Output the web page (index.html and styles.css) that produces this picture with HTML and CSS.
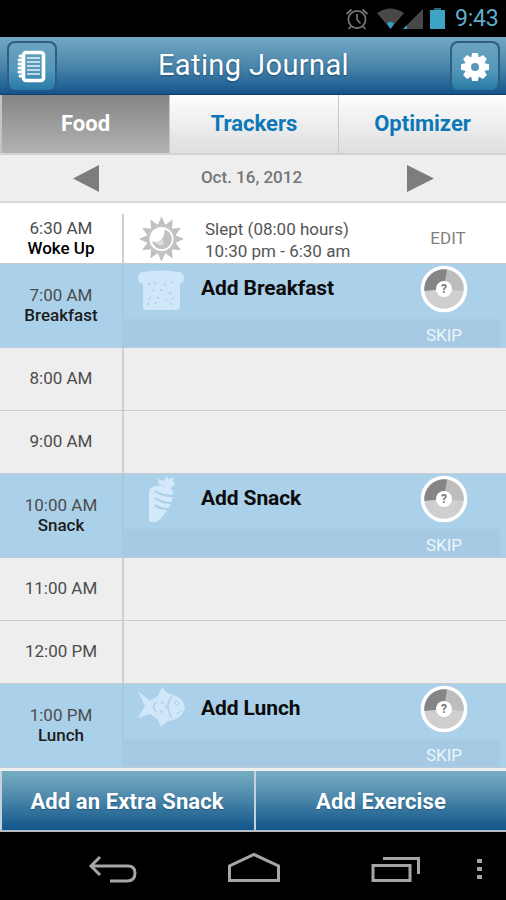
FILE: index.html
```html
<!DOCTYPE html>
<html lang="en">
<head>
    <meta charset="UTF-8">
    <meta name="viewport" content="width=device-width, initial-scale=1.0">
    <title>Eating Journal</title>
    <link rel="stylesheet" href="styles.css">
</head>
<body>
    <div class="app">
        <div class="status-bar">
            <svg class="status-icons" width="102" height="24" viewBox="0 0 102 24">
                <g fill="none" stroke="#777" stroke-width="1.7">
                    <circle cx="12" cy="12.5" r="8.600"/>
                    <path d="M12 7v5.500l3.500 4M1.500 7l5-4.500M17.500 2.500l5 4.500M6 19.500L3.500 22M18 19.500l2.500 2.500"/>
                </g>
                <path d="M32 6q13.500-9 27 0L45.500 22z" fill="#484848"/>
                <path d="M42 16.500q3.500-3.500 7 0l-3.500 5.500z" fill="#2fa0c8"/>
                <path d="M58 22L78 2v20z" fill="#484848"/>
                <path d="M58 22l4-4v4z" fill="#2fa0c8"/>
                <path d="M89 1h7v3h-7z" fill="#2c6478"/>
                <path d="M85 3h15v19H85z" fill="#3da4c6"/>
            </svg>
            <span class="clock">9:43</span>
        </div>

        <div class="header">
            <button class="header-btn">
                <svg width="30" height="34" viewBox="0 0 30 34">
                    <rect x="6.500" y="2.500" width="20" height="28" rx="2.500" fill="none" stroke="#fff" stroke-width="3.600"/>
                    <path d="M10 8h13M10 12h13M10 16h13M10 20h13M10 24h13" stroke="#e4f3f8" stroke-width="1.700"/>
                    <path d="M3 6h3M2 10h4M2 14h4M2 18h4M2 22h4M3 26h3" stroke="#fff" stroke-width="3" stroke-linecap="round"/>
                </svg>
            </button>
            <h1 class="title">Eating Journal</h1>
            <button class="header-btn">
                <svg width="30" height="30" viewBox="-15 -15 30 30">
                    <g fill="#fff">
                        <path id="tooth" d="M-4.200-8l1.400-6h5.600l1.400 6z"/>
                        <use href="#tooth" transform="rotate(45)"/>
                        <use href="#tooth" transform="rotate(90)"/>
                        <use href="#tooth" transform="rotate(135)"/>
                        <use href="#tooth" transform="rotate(180)"/>
                        <use href="#tooth" transform="rotate(225)"/>
                        <use href="#tooth" transform="rotate(270)"/>
                        <use href="#tooth" transform="rotate(315)"/>
                    </g>
                    <circle r="7" fill="none" stroke="#fff" stroke-width="6"/>
                </svg>
            </button>
        </div>

        <div class="tabs">
            <div class="tab active">Food</div>
            <div class="tab">Trackers</div>
            <div class="tab">Optimizer</div>
        </div>

        <div class="date-bar">
            <svg width="27" height="28" viewBox="0 0 27 28"><path d="M0 14.500L26 1v27z" fill="#7d7d7d"/></svg>
            <span class="date">Oct. 16, 2012</span>
            <svg width="27" height="28" viewBox="0 0 27 28"><path d="M27 14.500L0 1v27z" fill="#7d7d7d"/></svg>
        </div>

        <div class="journal">
            <div class="row woke">
                <div class="time">6:30 AM<b>Woke Up</b></div>
                <div class="entry">
                    <svg class="icon" width="48" height="48" viewBox="-24.500 -24 48 48">
                        <g fill="#bfbfbf">
                            <path id="ray" d="M-3.800-14L0-22.500l3.800 8.500z"/>
                            <use href="#ray" transform="rotate(30)"/>
                            <use href="#ray" transform="rotate(60)"/>
                            <use href="#ray" transform="rotate(90)"/>
                            <use href="#ray" transform="rotate(120)"/>
                            <use href="#ray" transform="rotate(150)"/>
                            <use href="#ray" transform="rotate(180)"/>
                            <use href="#ray" transform="rotate(210)"/>
                            <use href="#ray" transform="rotate(240)"/>
                            <use href="#ray" transform="rotate(270)"/>
                            <use href="#ray" transform="rotate(300)"/>
                            <use href="#ray" transform="rotate(330)"/>
                        </g>
                        <circle r="13.500" fill="#fff" stroke="#c4c4c4" stroke-width="3"/>
                        <path d="M3-9.500A10 10 0 1 1-9.500 2q5 3 9-1 4-4 3.500-10.500z" fill="#c2c2c2"/>
                        <path d="M-6 3q4 0 6-3 3 2 2 5-3 4-8-2z" fill="#dedede"/>
                    </svg>
                    <div class="slept">Slept (08:00 hours)<br>10:30 pm - 6:30 am</div>
                    <div class="edit">EDIT</div>
                </div>
            </div>

            <div class="row meal">
                <div class="time">7:00 AM<b>Breakfast</b></div>
                <div class="entry">
                    <svg class="icon" width="48" height="48" viewBox="0 -3 48 48">
                        <path d="M6 5Q24 2 42 5q5 1 5 6 0 5-4 6v23q0 3-3 3H9q-3 0-3-3V17q-5-1-5-6 0-5 5-6z" fill="#cfe7f8"/>
                        <path d="M11 17h2M17 15l2 2M27 18h2M34 16l2-1M15 24l2-1M23 23h2M32 25l2 2M12 32l2-2M20 31h2M28 33l2-1M36 30v2M10 37h2M18 37l1-2M33 37h2" stroke="#b2cbdb" stroke-width="1.300"/>
                    </svg>
                    <div class="meal-name">Add Breakfast</div>
                    <div class="actions">
                        <svg class="dial" width="48" height="48" viewBox="-24 -24 48 48">
                            <g id="dial">
                                <circle r="21.500" fill="#cfcfcf" stroke="#fff" stroke-width="3.600"/>
                                <path d="M0 0L3-19.500A19.700 19.700 0 0 1 19.700 2z" fill="#bdbdbd"/>
                                <path d="M0 0l-19.600 2A19.700 19.700 0 0 1 3-19.500z" fill="#858585"/>
                                <circle r="8" fill="#fff"/>
                                <text class="dial-text" y="4">?</text>
                            </g>
                        </svg>
                        <span class="skip">SKIP</span>
                    </div>
                </div>
            </div>

            <div class="row"><div class="time">8:00 AM</div><div class="entry"></div></div>
            <div class="row"><div class="time">9:00 AM</div><div class="entry"></div></div>

            <div class="row meal">
                <div class="time">10:00 AM<b>Snack</b></div>
                <div class="entry">
                    <svg class="icon" width="48" height="48" viewBox="0 0 48 48">
                        <path d="M12 17q1-4 6-5 9-1 16 3 3 2 2 6-1 8-5 14-4 7-10 12-3 2-6 2-3 0-3-3z" fill="#d3e8f8"/>
                        <path d="M22 11l-1-6 6 2 2-5 3 3 5-2-1 4 2 3-5 5q-5-4-11-4z" fill="#d3e8f8"/>
                        <path d="M18 17q6 5 19 5M18 24q6 5 17 5M18 31q4 4 13 4" fill="none" stroke="#aacfe9" stroke-width="2"/>
                    </svg>
                    <div class="meal-name">Add Snack</div>
                    <div class="actions">
                        <svg class="dial" width="48" height="48" viewBox="-24 -24 48 48"><use href="#dial"/></svg>
                        <span class="skip">SKIP</span>
                    </div>
                </div>
            </div>

            <div class="row"><div class="time">11:00 AM</div><div class="entry"></div></div>
            <div class="row"><div class="time">12:00 PM</div><div class="entry"></div></div>

            <div class="row meal">
                <div class="time">1:00 PM<b>Lunch</b></div>
                <div class="entry">
                    <svg class="icon" width="48" height="48" viewBox="0 0 48 48">
                        <path d="M1 7l12 10 8-5 4-9 5 6q16 3 18 14-2 12-17 14l-7 6-3-7-8-6L1 34l7-12z" fill="#cfe7f8"/>
                        <path d="M35 12q-8 10 0 22M19 18l-3 5 3 5M25 17v3M24 26v3M29 21v3" fill="none" stroke="#b0d1e8" stroke-width="1.500"/>
                        <circle cx="40" cy="19" r="2" fill="none" stroke="#b0d1e8"/>
                        <path d="M39 29q4 1 6-3" fill="none" stroke="#b0d1e8"/>
                    </svg>
                    <div class="meal-name">Add Lunch</div>
                    <div class="actions">
                        <svg class="dial" width="48" height="48" viewBox="-24 -24 48 48"><use href="#dial"/></svg>
                        <span class="skip">SKIP</span>
                    </div>
                </div>
            </div>
        </div>

        <div class="bottom-buttons">
            <button class="add-btn snack">Add an Extra Snack</button>
            <button class="add-btn exercise">Add Exercise</button>
        </div>

        <div class="nav-bar">
            <svg width="506" height="68" viewBox="0 0 506 68" fill="none" stroke="#a6a6a6" stroke-width="3">
                <path d="M100 25l-9 9 9 9M91 34h37q7 0 7 7 0 8-8 8h-17"/>
                <path d="M229.500 48.500V34L254 22.500 278.500 34v14.500z"/>
                <path d="M373 33.500h37v15h-37zM383 26.500h35.500V42"/>
                <path d="M479.500 27v21" stroke-width="5" stroke-dasharray="4 4"/>
            </svg>
        </div>
    </div>
</body>
</html>
```

FILE: styles.css
```css
* {
    box-sizing: border-box;
}

body {
    margin: 0;
    background-color: #000;
    font-family: Roboto, "Liberation Sans", sans-serif;
}

button {
    border: none;
    padding: 0;
    font-family: inherit;
    cursor: pointer;
}

svg {
    display: block;
    flex: none;
}

.app {
    width: 506px;
    height: 900px;
    display: flex;
    flex-direction: column;
    overflow: hidden;
}

.status-bar {
    height: 37px;
    display: flex;
    justify-content: flex-end;
    align-items: center;
    padding-right: 8px;
    background-color: #000;
}

.status-icons {
    margin-right: 8px;
}

.clock {
    width: 43px;
    color: #5eaecb;
    font-size: 23px;
    letter-spacing: -0.2px;
    white-space: nowrap;
}

.header {
    height: 58px;
    display: flex;
    justify-content: space-between;
    align-items: flex-start;
    padding: 4px 6px 0 7px;
    background: linear-gradient(#72a8c3, #4b86ab 50%, #205f94 90%, #15528a);
    border-bottom: 1px solid #123e66;
}

.header-btn {
    width: 50px;
    height: 49px;
    display: flex;
    justify-content: center;
    align-items: center;
    border: 2px solid #2e5f7c;
    border-bottom: none;
    border-radius: 8px;
    background: linear-gradient(#6ba3bf, #5296b9 60%, #277aa5);
}

.title {
    margin: 0;
    color: #fff;
    font-size: 29px;
    font-weight: 400;
    line-height: 48px;
    letter-spacing: 0.4px;
    text-shadow: 0 1px 2px #1c5076;
}

.tabs {
    height: 60px;
    display: grid;
    grid-template-columns: 170px 169px 167px;
    border-bottom: 2px solid #d2d2d2;
}

.tab {
    display: flex;
    justify-content: center;
    align-items: center;
    padding-bottom: 2px;
    border-right: 1px solid #c8c8c8;
    background: linear-gradient(#fdfdfd, #dedede);
    color: #0d78b8;
    font-size: 22px;
    font-weight: 700;
}

.tab:last-child {
    border-right: none;
}

.tab.active {
    border-left: 2px solid #c4c4c4;
    background: linear-gradient(#858585, #b2b2b2);
    color: #fff;
}

.date-bar {
    height: 48px;
    display: flex;
    justify-content: space-between;
    align-items: center;
    padding: 0 72px 0 73px;
    background-color: #eee;
    border-bottom: 2px solid #dadada;
}

.date {
    margin: 0 4px 2px 0;
    color: #757575;
    font-size: 17px;
    font-weight: 500;
}

.journal {
    height: 568px;
    background-color: #eee;
}

.row {
    height: 63px;
    display: grid;
    grid-template-columns: 122px 1fr;
    border-bottom: 1px solid #c6cbd0;
}

.time {
    display: flex;
    flex-direction: column;
    justify-content: center;
    align-items: center;
    padding-bottom: 2px;
    color: #4c4c4c;
    font-size: 17px;
    line-height: 20px;
}

.time b {
    color: #1c1c1c;
    font-weight: 500;
}

.entry {
    display: flex;
    border-left: 2px solid #cdd0d4;
}

.woke {
    height: 61px;
    padding-top: 11px;
    background-color: #fff;
}

.woke .entry {
    align-items: center;
}

.woke .time b {
    color: #000;
}

.icon {
    margin-left: 13px;
}

.slept {
    width: 200px;
    margin: 3px 0 0 20px;
    color: #555;
    font-size: 17px;
    line-height: 22px;
    white-space: nowrap;
}

.edit {
    width: 86px;
    padding-bottom: 2px;
    color: #808080;
    font-size: 17px;
    text-align: center;
}

.meal {
    height: 84px;
    background-color: #abd0ea;
    border-bottom-color: #b9ccda;
}

.meal .entry {
    border-left-color: #a6c9e0;
    background: linear-gradient(#abd0ea 54px, #a6cae3 56px) no-repeat 0 0 / 376px 100%;
}

.meal-name {
    width: 200px;
    margin: 12px 0 0 16px;
    color: #0c0c0c;
    font-size: 21px;
    font-weight: 700;
    line-height: 25px;
    letter-spacing: -0.1px;
}

.actions {
    width: 86px;
    display: flex;
    flex-direction: column;
    align-items: center;
    padding-top: 1px;
}

.dial-text {
    fill: #777;
    font-size: 12px;
    font-weight: 700;
    text-anchor: middle;
}

.skip {
    margin-top: 12px;
    color: #edf6fb;
    font-size: 17px;
    line-height: 20px;
}

.bottom-buttons {
    height: 61px;
    display: grid;
    grid-template-columns: 254px 250px;
    gap: 2px;
    background-color: #c4d4de;
    border-bottom: 2px solid #b5bec5;
}

.add-btn {
    padding-top: 2px;
    background: linear-gradient(#76adc4, #538cae 40%, #155a8c 95%);
    color: #fff;
    font-size: 22px;
    font-weight: 700;
    letter-spacing: 0.1px;
    text-shadow: 0 1px 1px #22587d;
}

.add-btn.snack {
    padding-right: 2px;
    border-left: 2px solid #c4d4de;
}

.nav-bar {
    height: 68px;
    background-color: #000;
}
```
